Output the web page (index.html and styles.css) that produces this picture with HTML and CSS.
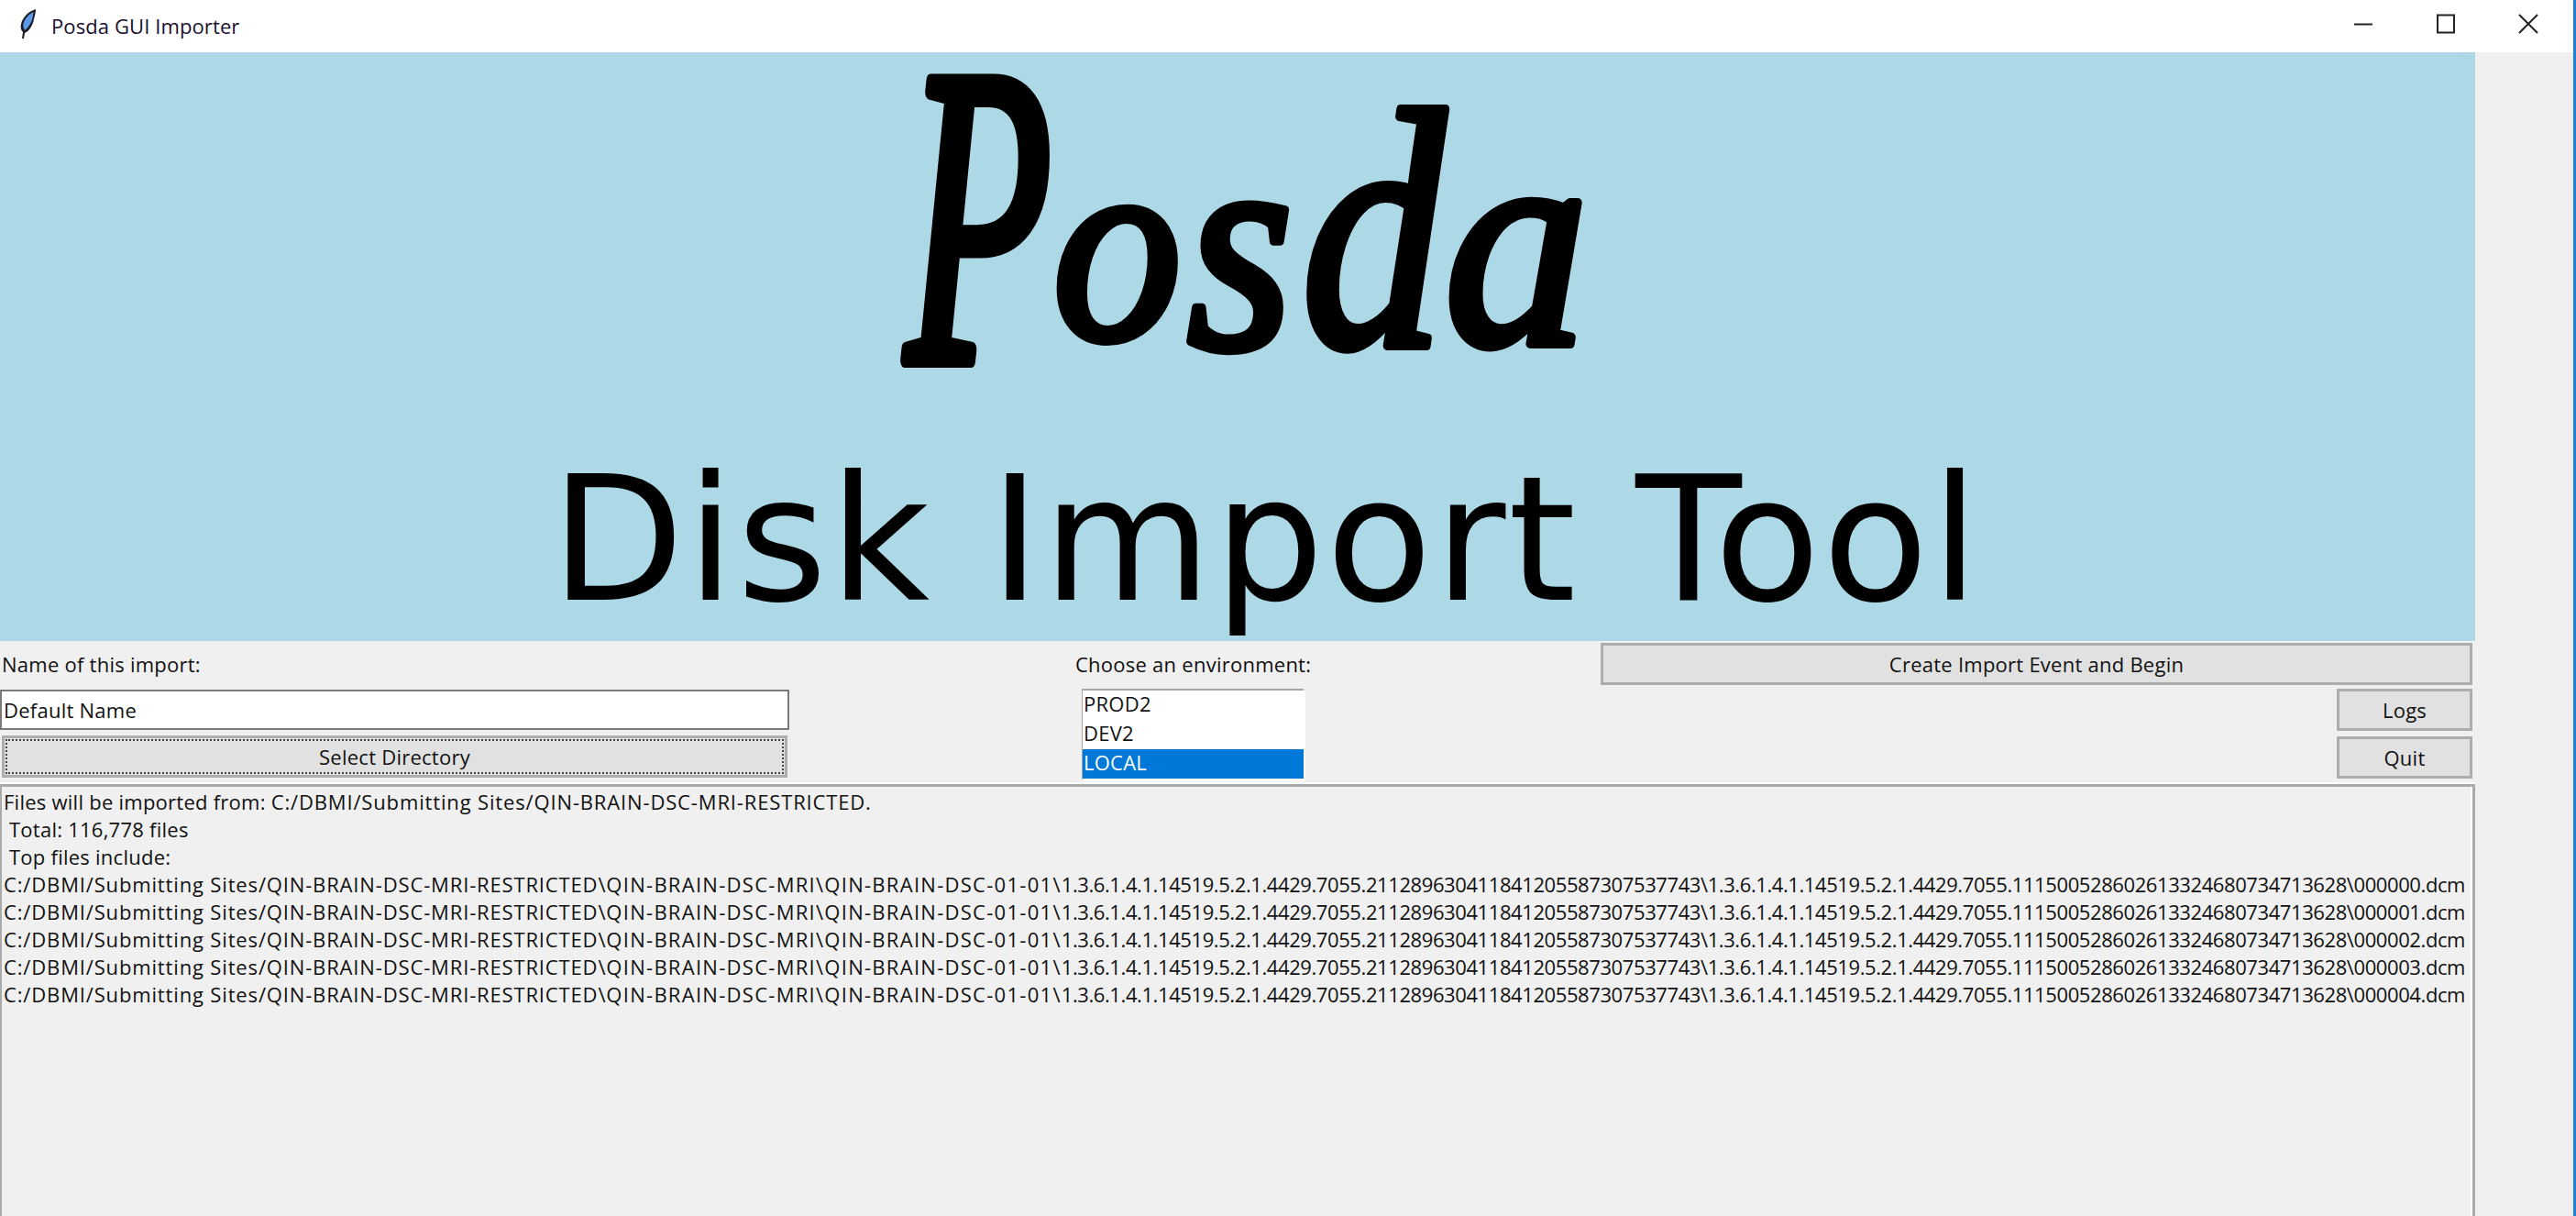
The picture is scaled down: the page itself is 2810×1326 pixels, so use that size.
FILE: index.html
```html
<!DOCTYPE html>
<html lang="en">
<head>
    <meta charset="UTF-8">
    <title>Posda GUI Importer</title>
    <link rel="stylesheet" href="styles.css">
</head>
<body>
    <div class="window">
        <div class="titlebar">
            <svg class="feather" viewBox="0 0 20 34" width="20" height="34">
                <path d="M18 1 C11 3 4 9 2 17 C1 21 2 24 4 26 L3 33 L5 33 L6 27 C11 25 15 18 16 12 C17 8 18 4 18 1 Z" fill="#1d1d26"/>
                <path d="M15.5 4 C10 7 6 11 4.5 17 C4 20 5 22 6 24 C10 21 13 16 14.5 11 Z" fill="#5a9be8"/>
            </svg>
            <span class="title-text">Posda GUI Importer</span>
            <div class="window-controls">
                <svg width="22" height="22" viewBox="0 0 22 22"><path d="M1 11.5 H21" stroke="#222" stroke-width="2"/></svg>
                <svg width="22" height="22" viewBox="0 0 22 22"><rect x="2" y="1.5" width="18" height="19" fill="none" stroke="#222" stroke-width="2"/></svg>
                <svg width="22" height="22" viewBox="0 0 22 22"><path d="M1 1 L21 21 M21 1 L1 21" stroke="#222" stroke-width="2"/></svg>
            </div>
        </div>
        <div class="client">
            <div class="app">
                <div class="banner">
                    <svg class="logo" viewBox="0 0 800 380" width="800" height="380">
                        <text class="logo-cap" transform="translate(38 336) scale(0.56 1)">P</text>
                        <text transform="translate(199 312) scale(0.93 1)">o</text>
                        <text class="logo-s" transform="translate(345 322) scale(0.9 1)">s</text>
                        <text class="logo-d" transform="translate(470 320) scale(0.84 1)">d</text>
                        <text class="logo-a" transform="translate(626 318) scale(0.95 1)">a</text>
                    </svg>
                    <h1>Disk Import Tool</h1>
                </div>
                <div class="form">
                    <div class="col-name">
                        <label class="lbl">Name of this import:</label>
                        <input class="entry" type="text" value="Default Name">
                        <button class="btn btn-focus"><span>Select Directory</span></button>
                    </div>
                    <div class="col-env">
                        <label class="lbl">Choose an environment:</label>
                        <ul class="listbox">
                            <li>PROD2</li>
                            <li>DEV2</li>
                            <li class="selected">LOCAL</li>
                        </ul>
                    </div>
                    <div class="col-actions">
                        <button class="btn btn-wide">Create Import Event and Begin</button>
                        <button class="btn btn-small">Logs</button>
                        <button class="btn btn-small btn-quit">Quit</button>
                    </div>
                </div>
                <div class="log">
                    <p>Files will be imported from: <span class="path">C:/DBMI/Submitting Sites/QIN-BRAIN-DSC-MRI-RESTRICTED.</span></p>
                    <p>&nbsp;Total: 116,778 files</p>
                    <p>&nbsp;Top files include:</p>
                    <p><span class="path">C:/DBMI/Submitting Sites/QIN-BRAIN-DSC-MRI-RESTRICTED\</span><span class="subdir">QIN-BRAIN-DSC-MRI\QIN-BRAIN-DSC-01-01\</span><span class="uid">1.3.6.1.4.1.14519.5.2.1.4429.7055.211289630411841205587307537743\1.3.6.1.4.1.14519.5.2.1.4429.7055.111500528602613324680734713628\000000.dcm</span></p>
                    <p><span class="path">C:/DBMI/Submitting Sites/QIN-BRAIN-DSC-MRI-RESTRICTED\</span><span class="subdir">QIN-BRAIN-DSC-MRI\QIN-BRAIN-DSC-01-01\</span><span class="uid">1.3.6.1.4.1.14519.5.2.1.4429.7055.211289630411841205587307537743\1.3.6.1.4.1.14519.5.2.1.4429.7055.111500528602613324680734713628\000001.dcm</span></p>
                    <p><span class="path">C:/DBMI/Submitting Sites/QIN-BRAIN-DSC-MRI-RESTRICTED\</span><span class="subdir">QIN-BRAIN-DSC-MRI\QIN-BRAIN-DSC-01-01\</span><span class="uid">1.3.6.1.4.1.14519.5.2.1.4429.7055.211289630411841205587307537743\1.3.6.1.4.1.14519.5.2.1.4429.7055.111500528602613324680734713628\000002.dcm</span></p>
                    <p><span class="path">C:/DBMI/Submitting Sites/QIN-BRAIN-DSC-MRI-RESTRICTED\</span><span class="subdir">QIN-BRAIN-DSC-MRI\QIN-BRAIN-DSC-01-01\</span><span class="uid">1.3.6.1.4.1.14519.5.2.1.4429.7055.211289630411841205587307537743\1.3.6.1.4.1.14519.5.2.1.4429.7055.111500528602613324680734713628\000003.dcm</span></p>
                    <p><span class="path">C:/DBMI/Submitting Sites/QIN-BRAIN-DSC-MRI-RESTRICTED\</span><span class="subdir">QIN-BRAIN-DSC-MRI\QIN-BRAIN-DSC-01-01\</span><span class="uid">1.3.6.1.4.1.14519.5.2.1.4429.7055.211289630411841205587307537743\1.3.6.1.4.1.14519.5.2.1.4429.7055.111500528602613324680734713628\000004.dcm</span></p>
                </div>
            </div>
        </div>
    </div>
</body>
</html>
```

FILE: styles.css
```css
html, body {
    margin: 0;
    padding: 0;
    height: 100%;
    overflow: hidden;
}

body {
    font-family: "Open Sans", "Noto Sans", sans-serif;
    font-size: 22px;
    letter-spacing: 0.25px;
    color: #111;
    background-color: #f0f0f0;
}

.window {
    height: 1326px;
    display: flex;
    flex-direction: column;
    border-right: 3px solid #1f7fd6;
    box-sizing: border-box;
}

.titlebar {
    height: 57px;
    flex: none;
    background-color: #fff;
    display: flex;
    align-items: center;
    padding-left: 21px;
}

.feather {
    margin-right: 15px;
    margin-top: -6px;
}

.title-text {
    font-size: 22px;
    letter-spacing: 0.1px;
    color: #1a1030;
    margin-top: -2px;
}

.window-controls {
    margin-left: auto;
    display: flex;
    gap: 68px;
    padding-right: 38px;
    margin-top: -6px;
}

.client {
    flex: 1;
    display: flex;
    min-height: 0;
}

.app {
    width: 2700px;
    display: flex;
    flex-direction: column;
}

.banner {
    height: 642px;
    flex: none;
    background-color: #add8e6;
    color: #000;
    display: flex;
    flex-direction: column;
    align-items: center;
}

.logo {
    flex: none;
    overflow: visible;
    font-family: "Liberation Serif", serif;
    font-style: italic;
    font-size: 300px;
    letter-spacing: 0;
    fill: #000;
    stroke: #000;
    stroke-width: 10px;
    stroke-linejoin: round;
}

.logo .logo-cap {
    font-size: 465px;
    stroke-width: 16px;
}

.logo .logo-s {
    font-size: 330px;
}

.logo .logo-d {
    font-size: 372px;
}

.logo .logo-a {
    font-size: 330px;
}

h1 {
    flex: none;
    font-family: "DejaVu Sans", sans-serif;
    font-weight: normal;
    font-size: 189px;
    letter-spacing: 2.5px;
    line-height: 219px;
    margin: 43px 0 0 62px;
    white-space: nowrap;
}

.form {
    height: 156px;
    flex: none;
    display: grid;
    grid-template-columns: 1173px 573px 1fr;
    box-sizing: border-box;
    padding-top: 2px;
}

.col-name {
    display: flex;
    flex-direction: column;
}

.lbl {
    height: 51px;
    line-height: 46px;
    padding-left: 2px;
}

.col-env .lbl {
    padding-left: 0;
}

.entry {
    width: 861px;
    height: 44px;
    box-sizing: border-box;
    border: 2px solid #7a7a7a;
    background-color: #fff;
    font-family: inherit;
    font-size: 22px;
    letter-spacing: inherit;
    color: #111;
    padding: 0 2px;
    margin: 0;
    outline: none;
}

.btn {
    font-family: inherit;
    font-size: 22px;
    letter-spacing: inherit;
    color: #111;
    background-color: #e1e1e1;
    border: 3px solid #adadad;
    box-sizing: border-box;
    padding: 0;
    margin: 0;
}

.btn-focus {
    width: 857px;
    height: 46px;
    margin: 6px 0 0 2px;
    padding: 1px;
}

.btn-focus span {
    display: block;
    height: 100%;
    line-height: 34px;
    box-sizing: border-box;
    border: 2px dotted #444;
}

.col-env {
    display: flex;
    flex-direction: column;
}

.col-env .lbl {
    height: 50px;
}

.listbox {
    list-style: none;
    margin: 0 0 0 7px;
    padding: 0;
    width: 242px;
    height: 99px;
    box-sizing: border-box;
    background-color: #fff;
    border-top: 2px solid #a5a5a5;
    border-left: 1px solid #a5a5a5;
    box-shadow: 2px 2px 0 #fff;
}

.listbox li {
    height: 32px;
    line-height: 28px;
    padding-left: 1px;
}

.listbox .selected {
    background-color: #0078d7;
    color: #fff;
}

.col-actions {
    display: flex;
    flex-direction: column;
    align-items: flex-end;
    padding-right: 3px;
    gap: 4px;
}

.btn-wide {
    width: 100%;
    height: 46px;
}

.btn-small {
    width: 148px;
    height: 46px;
}

.btn-quit {
    margin-top: 2px;
}

.log {
    flex: 1;
    min-height: 0;
    background-color: #f0f0f0;
    border-top: 3px solid #aaa;
    border-right: 3px solid #aaa;
    border-left: 2px solid #aaa;
    box-shadow: 0 -2px 0 #fff, inset -2px 0 0 #fff;
    padding-top: 1px;
    overflow: hidden;
    white-space: nowrap;
}

.log p {
    margin: 0;
    height: 30px;
    line-height: 30px;
    padding-left: 2px;
}

/* letters and hyphens run wider than the digits in the original font */
.path {
    letter-spacing: 0.85px;
}

.subdir {
    letter-spacing: 1.28px;
}

.uid {
    letter-spacing: -0.41px;
}
```
